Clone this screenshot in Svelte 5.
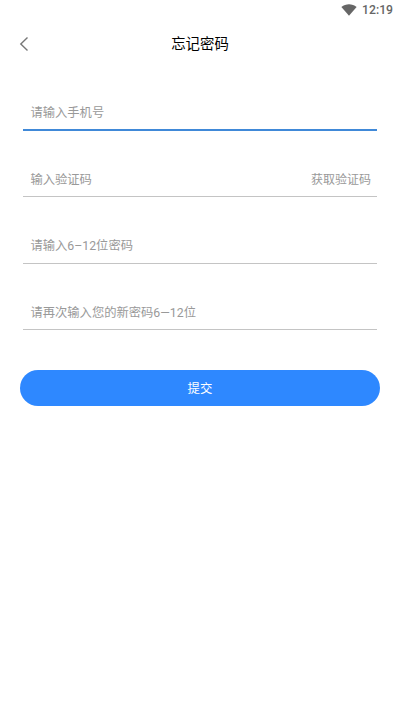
<script lang="ts">
  const fields = [
    { name: 'phone', hint: '请输入手机号', active: true },
    { name: 'code', hint: '输入验证码', action: '获取验证码' },
    { name: 'password', hint: '请输入6–12位密码' },
    { name: 'confirm', hint: '请再次输入您的新密码6—12位' },
  ];
</script>

<main class="screen">
  <div class="status">
    <svg class="wifi" viewBox="0 0 16 12" aria-hidden="true">
      <path d="M0.4 2.9C4.8-.5 11.2-.5 15.6 2.9L8 11.8Z" />
    </svg>
    <span>12:19</span>
  </div>

  <header class="bar">
    <button class="back" aria-label="返回">
      <svg viewBox="0 0 10 16" aria-hidden="true">
        <path d="M8.5 1.5L1.8 8L8.5 14.5" />
      </svg>
    </button>
    <h1>忘记密码</h1>
  </header>

  <form class="form" onsubmit={(e) => e.preventDefault()}>
    {#each fields as field (field.name)}
      <div class="field" class:active={field.active}>
        <span class="hint">{field.hint}</span>
        {#if field.action}
          <button type="button" class="code">{field.action}</button>
        {/if}
      </div>
    {/each}
    <button type="submit" class="submit">提交</button>
  </form>
</main>

<style>
  :global(body) {
    background: #fff;
  }

  .screen {
    box-sizing: border-box;
    height: 710px;
    overflow: hidden;
    background: #fff;
    font-family: Roboto, 'Noto Sans CJK SC', sans-serif;
  }

  button {
    padding: 0;
    border: none;
    background: none;
    font-family: inherit;
    cursor: pointer;
  }

  .status {
    display: flex;
    align-items: center;
    justify-content: flex-end;
    gap: 5px;
    box-sizing: border-box;
    height: 22px;
    padding: 0 7px 1px 0;
    color: #666;
    font-size: 12.2px;
    font-weight: 500;
    line-height: 15px;
  }

  .wifi {
    width: 16px;
    height: 12px;
    margin-bottom: 1px;
    fill: #666;
  }

  .bar {
    display: grid;
    grid-template-columns: 40px 1fr 40px;
    align-items: center;
    height: 44px;
  }

  .back {
    display: flex;
    padding-left: 19px;
  }

  .back svg {
    width: 10px;
    height: 16px;
    fill: none;
    stroke: #777;
    stroke-width: 1.4;
  }

  h1 {
    margin: 0;
    padding-top: 2px;
    color: #000;
    font-size: 14.4px;
    font-weight: 400;
    line-height: 22px;
    text-align: center;
  }

  .form {
    padding: 28px 20px 0;
  }

  .field {
    display: flex;
    align-items: center;
    justify-content: space-between;
    box-sizing: border-box;
    height: 37px;
    margin: 0 3px 29.4px;
    padding: 3px 6px 0 7.4px;
    border-bottom: 1px solid #c4c4c4;
    color: #999;
    font-size: 12.3px;
    line-height: 18px;
  }

  .field.active {
    padding-top: 2px;
    border-bottom: 2px solid #4089d8;
  }

  .hint {
    white-space: nowrap;
  }

  .code {
    color: #999;
    font-size: 12px;
    line-height: 18px;
  }

  .submit {
    display: block;
    width: 360px;
    height: 36.4px;
    margin-top: 39.8px;
    border-radius: 18.2px;
    background: #2e88ff;
    color: #fff;
    font-size: 12.4px;
  }
</style>
